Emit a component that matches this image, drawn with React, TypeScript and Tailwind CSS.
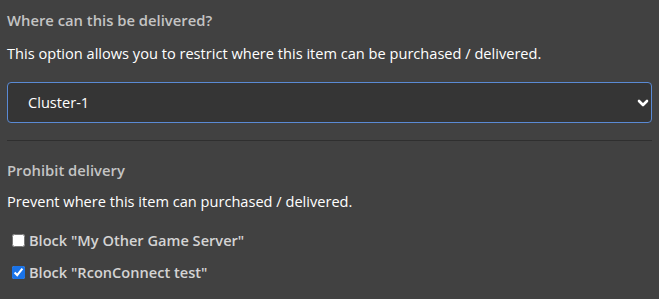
import React from "react";

export default function App() {
  return (
    <div className="w-[659px] h-[299px] bg-[#414141] px-[7px] pt-[9px] text-white overflow-hidden" style={{ fontFamily: '"Open Sans", sans-serif' }}>
      <div className="text-[14.8px] font-semibold text-[#c4c4c4] leading-[22px]">Where can this be delivered?</div>
      <p className="mt-[12px] text-[14.6px] leading-[20px] text-white">This option allows you to restrict where this item can be purchased / delivered.</p>
      <div className="mt-[19px] relative h-[41px] rounded-[4px] border border-[#5a8ad4] bg-[#353535] flex items-center pl-[20px]">
        <span className="text-[14.6px] text-white">Cluster-1</span>
        <svg className="absolute right-[2px] top-[16px]" width="12" height="9" viewBox="0 0 12 9">
          <path d="M2 2 L6 6 L10 2" fill="none" stroke="white" strokeWidth="2.6" strokeLinecap="round" strokeLinejoin="round" />
        </svg>
      </div>
      <div className="mt-[17px] h-px bg-[#2f2f2f]" />
      <div className="mt-[18px] text-[14.8px] font-semibold text-[#c4c4c4] leading-[22px]">Prohibit delivery</div>
      <p className="mt-[10px] text-[14.6px] leading-[20px] text-white">Prevent where this item can purchased / delivered.</p>
      <div className="mt-[19px] flex flex-col gap-[12px] pl-[5px]">
        <label className="flex items-center gap-[4px] text-[14.6px] font-semibold text-[#d4d4d4] leading-[20px]">
          <input type="checkbox" className="w-[13px] h-[13px] accent-[#1a73e8] m-0" />
          Block "My Other Game Server"
        </label>
        <label className="flex items-center gap-[4px] text-[14.6px] font-semibold text-[#d4d4d4] leading-[20px]">
          <input type="checkbox" defaultChecked className="w-[13px] h-[13px] accent-[#1a73e8] m-0" />
          Block "RconConnect test"
        </label>
      </div>
    </div>
  );
}
